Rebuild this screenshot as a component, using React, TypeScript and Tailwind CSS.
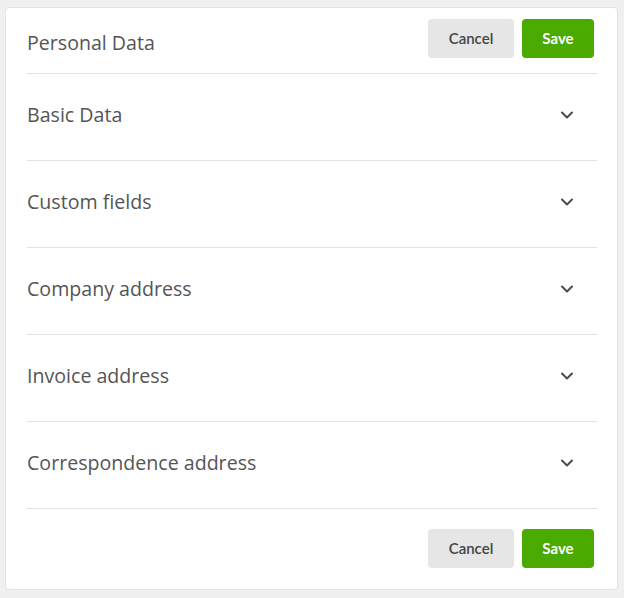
import React from "react";

const sections = [
  "Basic Data",
  "Custom fields",
  "Company address",
  "Invoice address",
  "Correspondence address",
];

function Chevron() {
  return (
    <svg width="14" height="10" viewBox="0 0 14 10" fill="none">
      <path d="M2 2.5L7 7.5L12 2.5" stroke="#4a4a4a" strokeWidth="2" strokeLinecap="round" strokeLinejoin="round" />
    </svg>
  );
}

function Buttons() {
  return (
    <div className="flex gap-2" style={{ fontFamily: "Lato, 'Liberation Sans', sans-serif" }}>
      <button className="w-[86px] h-[39px] rounded-[4px] bg-[#e6e6e6] text-[#444] text-[15px] font-semibold">
        Cancel
      </button>
      <button className="w-[72px] h-[39px] rounded-[4px] bg-[#4aaa00] text-white text-[15px] font-bold">
        Save
      </button>
    </div>
  );
}

export default function App() {
  return (
    <div className="w-[624px] h-[598px] bg-[#eff0ef] pt-[7px] pl-[5px]" style={{ fontFamily: "'Open Sans', sans-serif" }}>
      <div className="w-[613px] h-[583px] bg-white border border-[#e2e3e2] rounded-[4px] pl-[21px] pr-[20px] flex flex-col">
        <div className="h-[66px] flex items-center justify-between border-b border-[#e2e2e2] pt-[1px]">
          <div className="text-[19.6px] text-[#555] pt-[4px]">Personal Data</div>
          <div className="mr-[3px] mb-[6px]">
            <Buttons />
          </div>
        </div>
        {sections.map((s) => (
          <div key={s} className="h-[87px] flex items-center justify-between border-b border-[#e2e2e2]">
            <div className="text-[19.6px] text-[#555] mb-[5px]">{s}</div>
            <div className="mr-[23px] mb-[5px]">
              <Chevron />
            </div>
          </div>
        ))}
        <div className="flex justify-end pt-[20px] pr-[3px]">
          <Buttons />
        </div>
      </div>
    </div>
  );
}
